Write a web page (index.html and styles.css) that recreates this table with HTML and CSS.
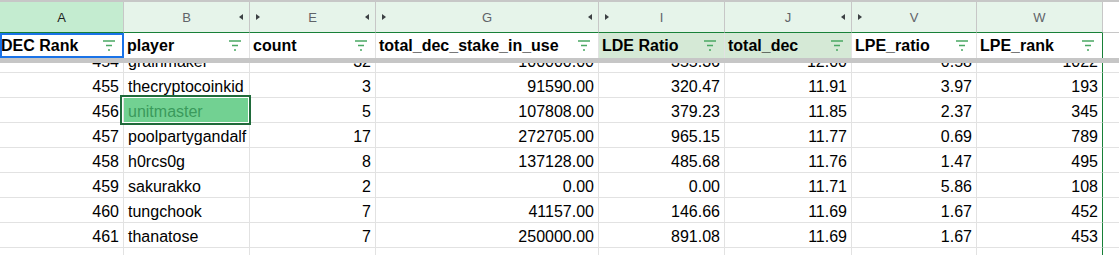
FILE: index.html
```html
<!DOCTYPE html>
<html lang="en">
<head>
  <meta charset="UTF-8" />
  <title>DEC Rank sheet</title>
  <link rel="stylesheet" href="styles.css">
</head>
<body>
  <div class="sheet">
    <!-- column letters -->
    <div class="grid colheads">
      <div class="ch sel"><span class="letter">A</span></div>
      <div class="ch"><span class="letter">B</span><i class="tri-l"></i></div>
      <div class="ch"><i class="tri-r"></i><span class="letter">E</span><i class="tri-l"></i></div>
      <div class="ch"><i class="tri-r"></i><span class="letter">G</span><i class="tri-l"></i></div>
      <div class="ch"><i class="tri-r"></i><span class="letter">I</span></div>
      <div class="ch"><span class="letter">J</span><i class="tri-l"></i></div>
      <div class="ch"><i class="tri-r"></i><span class="letter">V</span></div>
      <div class="ch"><span class="letter">W</span></div>
      <div class="ch blank"></div>
    </div>

    <!-- frozen header row -->
    <div class="grid hdr-row">
      <div class="hc active"><span>DEC Rank</span><svg class="filt" viewBox="0 0 12 11"><path d="M0 1h12M3 5.5h6M5 10h2"/></svg></div>
      <div class="hc"><span>player</span><svg class="filt" viewBox="0 0 12 11"><path d="M0 1h12M3 5.5h6M5 10h2"/></svg></div>
      <div class="hc"><span>count</span><svg class="filt" viewBox="0 0 12 11"><path d="M0 1h12M3 5.5h6M5 10h2"/></svg></div>
      <div class="hc"><span>total_dec_stake_in_use</span><svg class="filt" viewBox="0 0 12 11"><path d="M0 1h12M3 5.5h6M5 10h2"/></svg></div>
      <div class="hc tint"><span>LDE Ratio</span><svg class="filt" viewBox="0 0 12 11"><path d="M0 1h12M3 5.5h6M5 10h2"/></svg></div>
      <div class="hc tint"><span>total_dec</span><svg class="filt" viewBox="0 0 12 11"><path d="M0 1h12M3 5.5h6M5 10h2"/></svg></div>
      <div class="hc"><span>LPE_ratio</span><svg class="filt" viewBox="0 0 12 11"><path d="M0 1h12M3 5.5h6M5 10h2"/></svg></div>
      <div class="hc last"><span>LPE_rank</span><svg class="filt" viewBox="0 0 12 11"><path d="M0 1h12M3 5.5h6M5 10h2"/></svg></div>
      <div class="hc blank"></div>
    </div>
    <div class="freeze-bar"></div>

    <div class="rows">
      <div class="scroll">
        <div class="grid row">
          <div class="c num">454</div><div class="c">grainmaker</div><div class="c num">32</div><div class="c num">100000.00</div>
          <div class="c num">355.36</div><div class="c num">12.00</div><div class="c num">0.58</div><div class="c num last">1022</div><div class="c blank"></div>
        </div>
        <div class="grid row">
          <div class="c num">455</div><div class="c">thecryptocoinkid</div><div class="c num">3</div><div class="c num">91590.00</div>
          <div class="c num">320.47</div><div class="c num">11.91</div><div class="c num">3.97</div><div class="c num last">193</div><div class="c blank"></div>
        </div>
        <div class="grid row">
          <div class="c num">456</div><div class="c picked">unitmaster</div><div class="c num">5</div><div class="c num">107808.00</div>
          <div class="c num">379.23</div><div class="c num">11.85</div><div class="c num">2.37</div><div class="c num last">345</div><div class="c blank"></div>
        </div>
        <div class="grid row">
          <div class="c num">457</div><div class="c">poolpartygandalf</div><div class="c num">17</div><div class="c num">272705.00</div>
          <div class="c num">965.15</div><div class="c num">11.77</div><div class="c num">0.69</div><div class="c num last">789</div><div class="c blank"></div>
        </div>
        <div class="grid row">
          <div class="c num">458</div><div class="c">h0rcs0g</div><div class="c num">8</div><div class="c num">137128.00</div>
          <div class="c num">485.68</div><div class="c num">11.76</div><div class="c num">1.47</div><div class="c num last">495</div><div class="c blank"></div>
        </div>
        <div class="grid row">
          <div class="c num">459</div><div class="c">sakurakko</div><div class="c num">2</div><div class="c num">0.00</div>
          <div class="c num">0.00</div><div class="c num">11.71</div><div class="c num">5.86</div><div class="c num last">108</div><div class="c blank"></div>
        </div>
        <div class="grid row">
          <div class="c num">460</div><div class="c">tungchook</div><div class="c num">7</div><div class="c num">41157.00</div>
          <div class="c num">146.66</div><div class="c num">11.69</div><div class="c num">1.67</div><div class="c num last">452</div><div class="c blank"></div>
        </div>
        <div class="grid row">
          <div class="c num">461</div><div class="c">thanatose</div><div class="c num">7</div><div class="c num">250000.00</div>
          <div class="c num">891.08</div><div class="c num">11.69</div><div class="c num">1.67</div><div class="c num last">453</div><div class="c blank"></div>
        </div>
        <div class="grid row">
          <div class="c"></div><div class="c"></div><div class="c"></div><div class="c"></div>
          <div class="c"></div><div class="c"></div><div class="c"></div><div class="c last"></div><div class="c blank"></div>
        </div>
      </div>
    </div>
  </div>
</body>
</html>
```

FILE: styles.css
```css
* { box-sizing: border-box; }
body {
  margin: 0;
  font-family: 'Liberation Sans', Arial, sans-serif;
  background: #fff;
  overflow: hidden;
}
.sheet { width: 1119px; height: 255px; overflow: hidden; }
.grid {
  display: grid;
  grid-template-columns: 124px 126px 126px 223px 126px 127px 125px 126px 1fr;
}

/* column letters */
.colheads { border-top: 2px solid #c7c7c7; }
.ch {
  height: 31px;
  background: #e6f4ea;
  border-right: 1px solid #c7c7c7;
  border-bottom: 1px solid #188038;
  display: grid;
  grid-template-columns: 1fr auto 1fr;
  align-items: center;
  padding: 0 6px;
  font-size: 13px;
  color: #5f6368;
}
.ch .letter { grid-column: 2; padding-top: 1px; }
.ch.sel { background: #c4ecd0; color: #1f1f1f; }
.ch.blank { background: #fff; border-right: none; border-bottom-color: #c7c7c7; }
.tri-l, .tri-r { width: 0; height: 0; border-top: 3.5px solid transparent; border-bottom: 3.5px solid transparent; }
.tri-l { grid-column: 3; justify-self: end; border-right: 4px solid #3c4043; }
.tri-r { grid-column: 1; justify-self: start; border-left: 4px solid #3c4043; }

/* frozen header row */
.hdr-row { height: 25px; }
.hc {
  display: flex;
  align-items: center;
  justify-content: space-between;
  padding: 1px 8px 0 3px;
  border-right: 1px solid #e2e2e2;
  font-size: 16px;
  font-weight: bold;
  line-height: 20px;
  color: #000;
  white-space: nowrap;
  overflow: hidden;
}
.hc.active { outline: 2px solid #1a73e8; outline-offset: -2px; padding-left: 1px; }
.hc.tint { background: #d5e9d6; }
.hc.last { border-right-color: #188038; }
.hc.blank { border-right: none; }
.filt { width: 12px; height: 11px; flex: none; margin-top: -1px; }
.filt path { stroke: #4aa863; stroke-width: 1.6; fill: none; }

.freeze-bar { height: 5px; background: #c6c6c6; }

/* data rows */
.rows { height: 192px; overflow: hidden; }
.scroll { margin-top: -15px; }
.row { height: 25px; }
.c {
  border-right: 1px solid #e2e2e2;
  border-bottom: 1px solid #e2e2e2;
  padding: 4px 4px 0 4px;
  font-size: 16px;
  line-height: 20px;
  color: #000;
  white-space: nowrap;
  overflow: hidden;
}
.c.num { text-align: right; }
.c.last { border-right-color: #188038; }
.c.blank { border-right: none; }
.c.picked {
  position: relative;
  overflow: visible;
  background: #72d192;
  color: #3a9a5c;
  z-index: 2;
}
.c.picked::after {
  content: "";
  position: absolute;
  top: -3px; left: -4px; right: -2px; bottom: -3px;
  border: 2px solid #1f6a3a;
  box-shadow: inset 0 0 0 1px #fff;
}
```
